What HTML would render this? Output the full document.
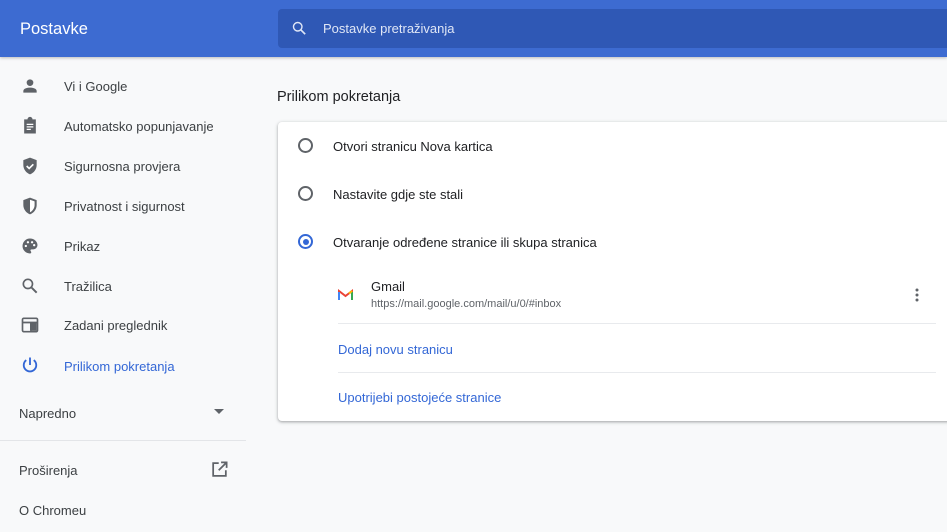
<!DOCTYPE html><html><head><style>
*{margin:0;padding:0;box-sizing:border-box}
body{width:947px;height:532px;overflow:hidden;background:#f8f9fa;font-family:"Liberation Sans",sans-serif;color:#202124;position:relative;white-space:nowrap}
.hdr{position:absolute;left:0;top:0;width:947px;height:57px;background:#3d6bd1;box-shadow:0 1px 3px rgba(0,0,0,.25)}
.hdr .t{position:absolute;left:20px;top:20px;color:#fff;font-size:16.5px}
.sb{position:absolute;left:278px;top:9px;width:669px;height:39px;background:#2f58b5;border-radius:4px 0 0 4px}
.sb span{position:absolute;left:45px;top:12px;color:#dfe6f6;font-size:13px}
.nav{position:absolute;left:0;top:0;width:246px;height:532px;font-size:13px;color:#3c4043}
.it{position:absolute;left:64px}
.ic{position:absolute;left:20px}
.h{position:absolute;left:277px;top:89px;font-size:14.5px;color:#202124}
.card{position:absolute;left:278px;top:122px;width:680px;height:299px;background:#fff;border-radius:4px;box-shadow:0 1px 2px rgba(60,64,67,.3),0 1px 3px 1px rgba(60,64,67,.15)}
.r{position:absolute;left:20px;width:15px;height:15px;border:2px solid #5f6368;border-radius:50%}
.rl{position:absolute;left:55px;font-size:13px;color:#202124}
.ln{position:absolute;left:60px;right:22px;height:1px;background:#e8eaed}
.lk{position:absolute;left:60px;font-size:13px;color:#3367d6}
</style></head><body>
<div class="hdr"><div class="t">Postavke</div>
<div class="sb"><svg style="position:absolute;left:13px;top:11px" width="17" height="17" viewBox="0 0 24 24"><circle cx="9.5" cy="9.5" r="6" fill="none" stroke="#dfe6f6" stroke-width="2"/><path d="M14 14l6 6" stroke="#dfe6f6" stroke-width="2.4"/></svg><span>Postavke pretraživanja</span></div></div>
<div class="nav">
<svg class="ic" style="top:76px" width="20" height="20" viewBox="0 0 24 24"><circle cx="12" cy="8" r="4" fill="#5f6368"/><path d="M4 20v-2c0-3 5-4 8-4s8 1 8 4v2z" fill="#5f6368"/></svg><div class="it" style="top:79px">Vi i Google</div>
<svg class="ic" style="top:116px" width="20" height="20" viewBox="0 0 24 24"><path d="M5 4h4a3 3 0 016 0h4v17H5z" fill="#5f6368"/><path d="M8 10h8M8 13h8M8 16h5" stroke="#fff" stroke-width="1.5"/></svg><div class="it" style="top:119px">Automatsko popunjavanje</div>
<svg class="ic" style="top:156px" width="20" height="20" viewBox="0 0 24 24"><path d="M12 2l8 3v6c0 5-3.5 9.5-8 11-4.5-1.5-8-6-8-11V5z" fill="#5f6368"/><path d="M8 12l3 3 5-5" stroke="#fff" stroke-width="2" fill="none"/></svg><div class="it" style="top:159px">Sigurnosna provjera</div>
<svg class="ic" style="top:196px" width="20" height="20" viewBox="0 0 24 24"><path d="M12 2l8 3v6c0 5-3.5 9.5-8 11-4.5-1.5-8-6-8-11V5z" fill="#5f6368"/><path d="M12 4.5v15c3-1.3 5.5-4.8 5.5-8.5V6.5z" fill="#fff"/></svg><div class="it" style="top:199px">Privatnost i sigurnost</div>
<svg class="ic" style="top:236px" width="20" height="20" viewBox="0 0 24 24"><path d="M12 3a9 9 0 000 18c1 0 1.5-.7 1.5-1.5 0-1-1-1.2-1-2.2 0-.8.7-1.3 1.5-1.3H16a5 5 0 005-5c0-4.4-4-8-9-8z" fill="#5f6368"/><circle cx="7" cy="12" r="1.4" fill="#fff"/><circle cx="9.5" cy="7.5" r="1.4" fill="#fff"/><circle cx="14.5" cy="7.5" r="1.4" fill="#fff"/><circle cx="17" cy="11" r="1.4" fill="#fff"/></svg><div class="it" style="top:239px">Prikaz</div>
<svg class="ic" style="top:276px" width="20" height="20" viewBox="0 0 24 24"><circle cx="9.5" cy="9.5" r="5.5" fill="none" stroke="#5f6368" stroke-width="2"/><path d="M14 14l6 6" stroke="#5f6368" stroke-width="2.4"/></svg><div class="it" style="top:279px">Tražilica</div>
<svg class="ic" style="top:315px" width="20" height="20" viewBox="0 0 24 24"><rect x="3" y="4" width="18" height="16" rx="1.5" fill="none" stroke="#5f6368" stroke-width="2"/><path d="M3 9h18M13 9v10" stroke="#5f6368" stroke-width="2"/><rect x="13" y="9" width="7" height="10" fill="#5f6368"/></svg><div class="it" style="top:318px">Zadani preglednik</div>
<svg class="ic" style="top:355px" width="20" height="20" viewBox="0 0 24 24"><path d="M12 3v9" stroke="#3367d6" stroke-width="2.2"/><path d="M7.5 6.2a7.5 7.5 0 109 0" fill="none" stroke="#3367d6" stroke-width="2.2"/></svg><div class="it" style="top:359px;color:#3367d6">Prilikom pokretanja</div>
<div style="position:absolute;left:19px;top:406px">Napredno</div>
<svg style="position:absolute;left:214px;top:409px" width="10" height="6"><path d="M0 0h10L5 5z" fill="#5f6368"/></svg>
<div style="position:absolute;left:0;top:440px;width:246px;height:1px;background:#e3e5e8"></div>
<div style="position:absolute;left:19px;top:463px">Proširenja</div>
<svg style="position:absolute;left:210px;top:460px" width="19" height="19" viewBox="0 0 24 24"><path d="M11 4H4v16h16v-7" fill="none" stroke="#5f6368" stroke-width="2.2"/><path d="M14 3h7v7M21 3l-10 10" fill="none" stroke="#5f6368" stroke-width="2.2"/></svg>
<div style="position:absolute;left:19px;top:503px">O Chromeu</div>
</div>
<div class="h">Prilikom pokretanja</div>
<div class="card">
<div class="r" style="top:16px"></div><div class="rl" style="top:17px">Otvori stranicu Nova kartica</div>
<div class="r" style="top:64px"></div><div class="rl" style="top:65px">Nastavite gdje ste stali</div>
<div class="r" style="top:112px;border-color:#3367d6"><div style="position:absolute;left:2.5px;top:2.5px;width:6px;height:6px;border-radius:50%;background:#3367d6"></div></div><div class="rl" style="top:113px">Otvaranje određene stranice ili skupa stranica</div>
<svg style="position:absolute;left:60px;top:167px" width="15" height="12" viewBox="0 0 15 12"><path d="M1 11V2l6.5 5L14 2v9" fill="none" stroke="#ea4335" stroke-width="2"/><path d="M1 11V3" stroke="#4285f4" stroke-width="2"/><path d="M14 11V3" stroke="#34a853" stroke-width="2"/><path d="M11 4.5L14 2" stroke="#fbbc04" stroke-width="2"/></svg>
<div style="position:absolute;left:93px;top:157px;font-size:13px">Gmail</div>
<div style="position:absolute;left:93px;top:176px;font-size:11px;color:#5f6368">https://mail.google.com/mail/u/0/#inbox</div>
<svg style="position:absolute;left:637px;top:166px" width="4" height="14"><circle cx="2" cy="2" r="1.5" fill="#5f6368"/><circle cx="2" cy="7" r="1.5" fill="#5f6368"/><circle cx="2" cy="12" r="1.5" fill="#5f6368"/></svg>
<div class="ln" style="top:201px"></div>
<div class="lk" style="top:220px">Dodaj novu stranicu</div>
<div class="ln" style="top:250px"></div>
<div class="lk" style="top:268px">Upotrijebi postojeće stranice</div>
</div>
</body></html>
